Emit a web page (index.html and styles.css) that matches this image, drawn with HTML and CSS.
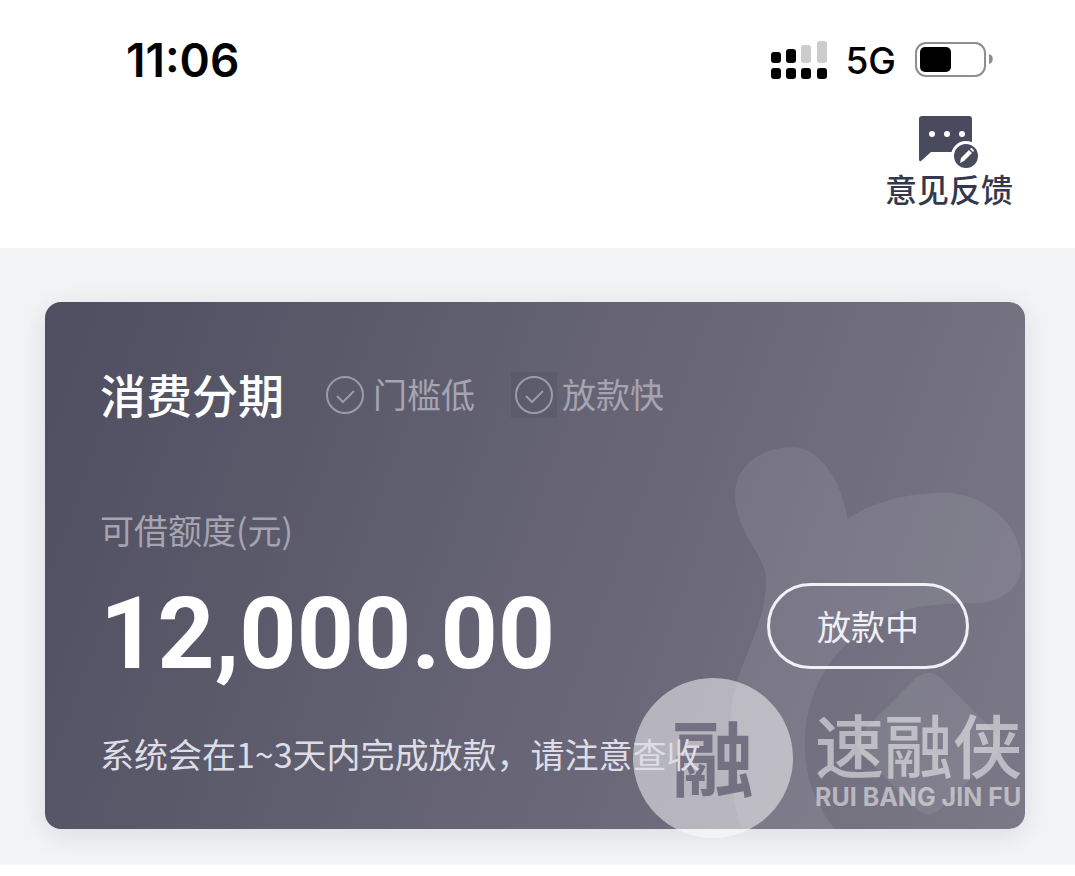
FILE: index.html
```
<!DOCTYPE html>
<html lang="zh-CN">
  <head>
    <meta charset="utf-8">
    <meta name="viewport" content="width=device-width, initial-scale=1">
    <title>消费分期</title>
    <link rel="stylesheet" href="styles.css">
  </head>
  <body>
    <header>
      <div class="status">
        <span class="time">11:06</span>
        <div class="status-right">
          <svg class="signal" width="56" height="38" viewBox="0 0 56 38">
            <rect x="0" y="11" width="10" height="11" rx="3"/>
            <rect x="15" y="8" width="10" height="14" rx="3"/>
            <rect class="off" x="30" y="4" width="10" height="18" rx="3"/>
            <rect class="off" x="46" y="0" width="10" height="22" rx="3"/>
            <rect x="0" y="27" width="10" height="11" rx="3"/>
            <rect x="15" y="27" width="10" height="11" rx="3"/>
            <rect x="30" y="27" width="10" height="11" rx="3"/>
            <rect x="46" y="27" width="10" height="11" rx="3"/>
          </svg>
          <span class="network">5G</span>
          <svg class="battery" width="80" height="38" viewBox="0 0 80 38">
            <rect x="2" y="2" width="69" height="33" rx="10" fill="#fff" stroke="#8e8e8e" stroke-width="2"/>
            <rect x="6" y="6" width="31" height="25" rx="5" fill="#000"/>
            <path d="M75 13 C80 14 80 22 75 23 Z" fill="#8e8e8e"/>
          </svg>
        </div>
      </div>
      <a class="feedback" href="#">
        <svg width="60" height="54" viewBox="0 0 60 54">
          <path d="M3 0 H50 Q53 0 53 3 V36 H12 L2 45 Q0 46 0 43 V3 Q0 0 3 0 Z" fill="#4a4a5e"/>
          <circle cx="13" cy="18" r="3" fill="#fff"/>
          <circle cx="28" cy="18" r="3" fill="#fff"/>
          <circle cx="43" cy="18" r="3" fill="#fff"/>
          <circle cx="47" cy="40" r="15" fill="#fff"/>
          <circle cx="47" cy="40" r="12" fill="#4a4a5e"/>
          <path d="M41 47 L42 42 L50 34 L53 37 L45 45 Z M51 33 L52 32 Q54 32 55 35 L54 36 Z" fill="#fff"/>
        </svg>
        <span>意见反馈</span>
      </a>
    </header>

    <main>
      <section class="card">
        <div class="decor">
          <svg width="300" height="390" viewBox="315 27 900 1170">
            <path d="M682 268 C760 210 880 188 970 188 C1100 188 1205 290 1205 400 C1205 470 1150 518 1060 520 C960 518 860 530 790 565 C640 640 555 780 555 940 C555 1050 590 1130 645 1197 H365 C330 1100 320 950 335 830 C355 680 440 600 438 440 C430 370 345 300 345 195 C345 110 420 52 515 52 C600 52 665 150 682 268 Z"/>
            <path d="M890 742 Q925 714 960 742 L1123 905 Q1155 940 1123 975 L960 1138 Q925 1168 890 1138 L727 975 Q695 940 727 905 Z"/>
          </svg>
        </div>

        <div class="card-head">
          <h1>消费分期</h1>
          <div class="tag">
            <svg width="46" height="46" viewBox="0 0 46 46">
              <circle cx="23" cy="23" r="18"/>
              <path d="M15 24 L21 30 L32 19"/>
            </svg>
            <span>门槛低</span>
          </div>
          <div class="tag">
            <svg class="shaded" width="46" height="46" viewBox="0 0 46 46">
              <circle cx="23" cy="23" r="18"/>
              <path d="M15 24 L21 30 L32 19"/>
            </svg>
            <span>放款快</span>
          </div>
        </div>

        <div class="card-body">
          <div>
            <p class="label">可借额度(元)</p>
            <p class="amount">12,000.00</p>
          </div>
          <button class="btn" type="button">放款中</button>
        </div>

        <p class="note">系统会在1~3天内完成放款，请注意查收</p>

        <div class="brand">
          <span class="brand-mark">融</span>
          <div class="brand-text">
            <p class="brand-name">速融侠</p>
            <p class="brand-sub">RUI BANG JIN FU</p>
          </div>
        </div>
      </section>
    </main>
  </body>
</html>
```

FILE: styles.css
```
* {
  box-sizing: border-box;
  margin: 0;
  padding: 0;
}

body {
  background: #fff;
  font-family: Inter, "Noto Sans CJK SC", sans-serif;
}

header {
  padding: 36px 62px 36px 126px;
}

.status {
  display: flex;
  justify-content: space-between;
  align-items: center;
  height: 48px;
  padding-right: 19px;
}

.time {
  font-size: 46px;
  font-weight: 600;
}

.status-right {
  display: flex;
  align-items: center;
}

.signal {
  margin-right: 18px;
}

.signal .off {
  fill: #ccc;
}

.network {
  margin-right: 18px;
  font-size: 37px;
  font-weight: 500;
}

.feedback {
  display: flex;
  flex-direction: column;
  align-items: center;
  width: 128px;
  margin-top: 32px;
  margin-left: auto;
  color: #33384e;
  font-size: 32px;
  font-weight: 500;
  line-height: 42px;
  text-decoration: none;
}

main {
  padding: 54px 50px 36px 45px;
  background: #f3f4f5;
}

.card {
  position: relative;
  padding: 60px 56px 50px 55px;
  border-radius: 16px;
  background: linear-gradient(110deg, #4e4e60 0%, #6a6878 60%, #7b7988 100%);
  box-shadow: 0 6px 28px rgba(90, 95, 130, 0.16);
  color: #fff;
}

.decor {
  position: absolute;
  inset: 0;
  overflow: hidden;
  border-radius: 16px;
}

.decor svg {
  position: absolute;
  right: 0;
  bottom: 0;
  fill: rgba(255, 255, 255, 0.08);
}

.card-head {
  position: relative;
  display: flex;
  align-items: center;
  height: 62px;
}

.card-head h1 {
  margin-right: 38px;
  font-family: "Noto Sans CJK SC", sans-serif;
  font-size: 46px;
  font-weight: 500;
}

.tag {
  display: flex;
  align-items: center;
  gap: 5px;
  margin-right: 36px;
  color: #a5a4b0;
  font-family: "Noto Sans CJK SC", sans-serif;
  font-size: 34px;
  font-weight: 400;
}

.tag svg {
  margin-top: 4px;
  fill: none;
  stroke: #9c9ba8;
  stroke-width: 2;
}

.tag .shaded {
  background: rgba(60, 60, 75, 0.16);
}

.card-body {
  position: relative;
  display: flex;
  justify-content: space-between;
  align-items: flex-end;
  margin-top: 82px;
}

.label {
  color: #a5a4b0;
  font-family: "Noto Sans CJK SC", sans-serif;
  font-size: 34px;
  font-weight: 400;
  line-height: 48px;
}

.amount {
  margin-top: 20px;
  font-family: Roboto, sans-serif;
  font-size: 100px;
  font-weight: 700;
  line-height: 120px;
}

.btn {
  width: 202px;
  height: 86px;
  margin-bottom: 25px;
  border: 3px solid #f0f0f6;
  border-radius: 43px;
  background: none;
  color: #f0f0f6;
  font-family: "Noto Sans CJK SC", sans-serif;
  font-size: 34px;
  font-weight: 400;
  line-height: 76px;
  cursor: pointer;
}

.note {
  position: relative;
  z-index: 1;
  margin-top: 35px;
  color: #dddde5;
  font-family: "Noto Sans CJK SC", sans-serif;
  font-size: 34px;
  font-weight: 400;
  line-height: 50px;
}

/* brand stamp hangs over the bottom edge of the card */
.brand {
  position: absolute;
  right: 0;
  bottom: -9px;
  display: flex;
  align-items: center;
  gap: 22px;
  color: rgba(255, 255, 255, 0.5);
  font-family: "Noto Sans CJK SC", sans-serif;
}

.brand-mark {
  display: flex;
  justify-content: center;
  align-items: center;
  width: 160px;
  height: 160px;
  padding-bottom: 8px;
  border-radius: 50%;
  background: rgba(255, 255, 255, 0.5);
  color: #747282;
  font-size: 82px;
  font-weight: 700;
}

.brand-text {
  width: 210px;
}

.brand-name {
  font-size: 69px;
  font-weight: 500;
  line-height: 72px;
}

.brand-sub {
  margin-top: 6px;
  font-family: Inter, sans-serif;
  font-size: 25px;
  font-weight: 700;
  line-height: 24px;
  white-space: nowrap;
}
```
